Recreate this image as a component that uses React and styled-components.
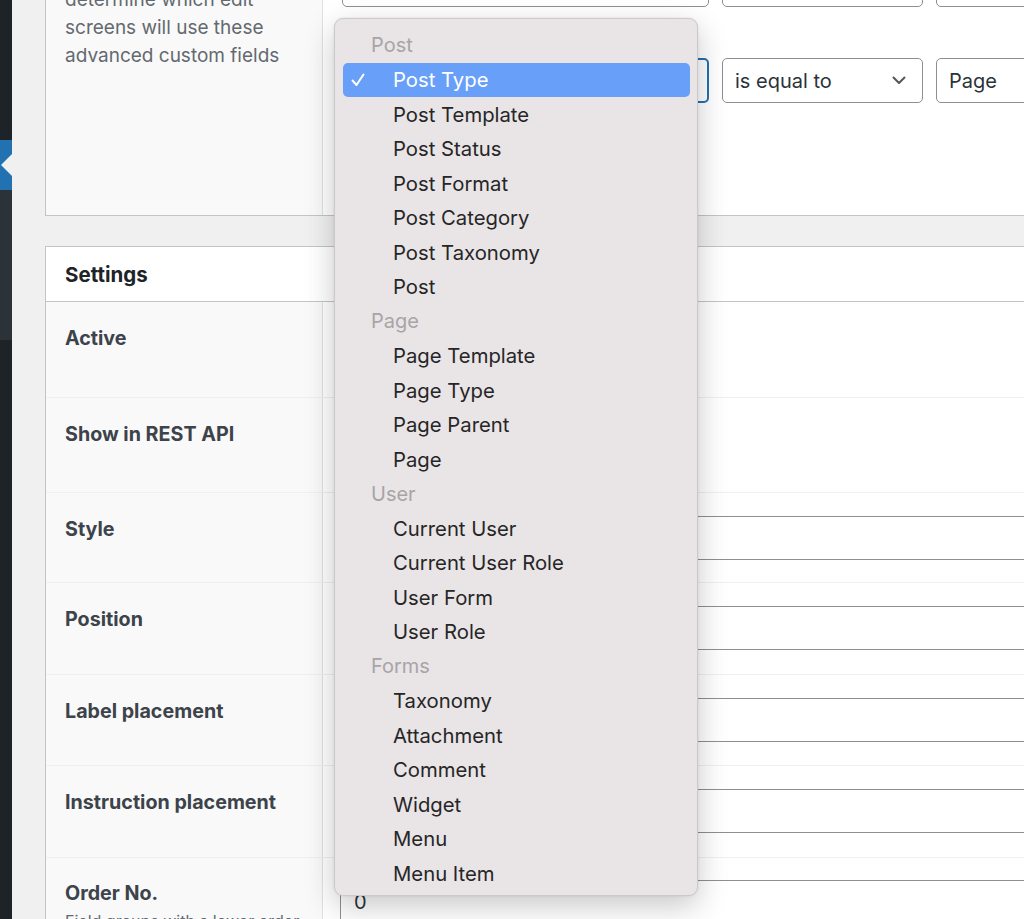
import React from "react";
import styled, { createGlobalStyle } from "styled-components";

const GlobalStyle = createGlobalStyle`
  html, body {
    margin: 0;
    padding: 0;
    background: #f0f0f1;
    overflow: hidden;
  }
  body {
    font-family: Inter, "Noto Sans", "Liberation Sans", sans-serif;
    -webkit-font-smoothing: antialiased;
  }
`;

// 전체 화면
const Page = styled.div`
  position: relative;
  display: flex;
  width: 1024px;
  height: 919px;
  overflow: hidden;
  background: #f0f0f1;
`;

// 왼쪽 관리자 메뉴 (잘린 부분)
const Sidebar = styled.div`
  display: flex;
  flex-direction: column;
  width: 12px;
  flex-shrink: 0;
`;

const SideBlock = styled.div`
  position: relative;
  height: ${(p) => p.$h}px;
  flex: ${(p) => (p.$grow ? 1 : "none")};
  background: ${(p) => p.$bg};
`;

const Notch = styled.div`
  position: absolute;
  right: 0;
  top: 14px;
  width: 0;
  height: 0;
  border-top: 11px solid transparent;
  border-bottom: 11px solid transparent;
  border-right: 11px solid #f0f0f1;
`;

const Main = styled.div`
  flex: 1;
  min-width: 0;
  padding-left: 33px;
`;

const Content = styled.div`
  width: 1100px;
  margin-top: -96px;
  display: flex;
  flex-direction: column;
  gap: 30px;
`;

const Panel = styled.div`
  background: #fff;
  border: 1px solid #c3c4c7;
  border-right: none;
`;

const FieldRow = styled.div`
  box-sizing: border-box;
  display: grid;
  grid-template-columns: 277px 1fr;
  min-height: ${(p) => p.$minH || 92}px;
  border-top: ${(p) => (p.$first ? "none" : "1px solid #f0f0f1")};
`;

const LabelCell = styled.div`
  background: #f9f9f9;
  border-right: 1px solid #e1e1e1;
  padding: ${(p) => p.$pt ?? 22.5}px 19px 0;
`;

const InputCell = styled.div`
  padding: ${(p) => p.$pt ?? 22.5}px 0 0 17px;
  display: flex;
  flex-direction: column;
  gap: ${(p) => p.$gap || 0}px;
`;

const Label = styled.div`
  font-size: 19.7px;
  line-height: 27px;
  font-weight: 700;
  color: #3c434a;
`;

const Description = styled.div`
  margin-top: 6px;
  font-size: 19px;
  line-height: 28px;
  color: #646970;
`;

const SmallNote = styled.div`
  margin-top: 3px;
  font-size: 16px;
  line-height: 22px;
  color: #646970;
`;

const RuleLine = styled.div`
  display: flex;
  gap: 13px;
  padding-left: 2px;
`;

const Select = styled.div`
  box-sizing: border-box;
  display: flex;
  align-items: center;
  justify-content: space-between;
  width: ${(p) => p.$w}px;
  height: ${(p) => p.$h || 45}px;
  padding: 0 16px 0 12px;
  background: #fff;
  border: ${(p) => (p.$focus ? "2px solid #2271b1" : "1px solid #8c8f94")};
  border-radius: 5px;
  font-size: 20px;
  color: #2c3338;
`;

const TextInput = styled.div`
  box-sizing: border-box;
  display: flex;
  align-items: center;
  width: 760px;
  height: 44px;
  padding-left: 13px;
  border: 1px solid #8c8f94;
  border-radius: 5px;
  font-size: 20px;
  color: #2c3338;
`;

const Toggle = styled.div`
  width: 48px;
  height: 26px;
  border-radius: 13px;
  background: #2271b1;
`;

const PanelHeader = styled.div`
  height: 54px;
  display: flex;
  align-items: center;
  padding-left: 19px;
  border-bottom: 1px solid #c3c4c7;
  font-size: 20.5px;
  font-weight: 700;
  color: #1d2327;
`;

// 드롭다운 메뉴 (macOS 스타일)
const Menu = styled.div`
  position: absolute;
  left: 334px;
  top: 18px;
  width: 364px;
  height: 878px;
  box-sizing: border-box;
  padding: 9px 7px 0 8px;
  background: #e9e4e6;
  border: 1px solid #cdc9cb;
  border-radius: 9px;
  box-shadow: 0 10px 30px rgba(0, 0, 0, 0.22), 0 0 3px rgba(0, 0, 0, 0.08);
`;

const GroupTitle = styled.div`
  height: 34.5px;
  display: flex;
  align-items: center;
  padding-left: 28px;
  font-size: 20px;
  color: #a8a4a6;
`;

const Item = styled.div`
  position: relative;
  height: 34.5px;
  display: flex;
  align-items: center;
  padding-left: 50px;
  border-radius: 5px;
  font-size: 20.3px;
  color: ${(p) => (p.$selected ? "#fff" : "#262626")};
  background: ${(p) => (p.$selected ? "#689ff8" : "transparent")};
`;

const Check = styled.svg`
  position: absolute;
  left: 8px;
  top: 10px;
`;

const Chevron = () => (
  <svg width="14" height="9" viewBox="0 0 14 9">
    <polyline points="1.5,1.5 7,7 12.5,1.5" fill="none" stroke="#50575e" strokeWidth="2" strokeLinecap="round" strokeLinejoin="round" />
  </svg>
);

const groups = [
  { title: "Post", items: ["Post Type", "Post Template", "Post Status", "Post Format", "Post Category", "Post Taxonomy", "Post"] },
  { title: "Page", items: ["Page Template", "Page Type", "Page Parent", "Page"] },
  { title: "User", items: ["Current User", "Current User Role", "User Form", "User Role"] },
  { title: "Forms", items: ["Taxonomy", "Attachment", "Comment", "Widget", "Menu", "Menu Item"] },
];

const settings = [
  { label: "Active", kind: "toggle", h: 95 },
  { label: "Show in REST API", kind: "toggle", h: 95 },
  { label: "Style", kind: "select", h: 90 },
  { label: "Position", kind: "select", h: 92 },
  { label: "Label placement", kind: "select", h: 91 },
  { label: "Instruction placement", kind: "select", h: 92 },
  { label: "Order No.", kind: "number", h: 92 },
];

const App = () => {
  return (
    <Page>
      <GlobalStyle />
      <Sidebar>
        <SideBlock $h={140} $bg="#1d2327" />
        <SideBlock $h={50} $bg="#2271b1">
          <Notch />
        </SideBlock>
        <SideBlock $h={150} $bg="#2c3338" />
        <SideBlock $grow $bg="#1d2327" />
      </Sidebar>

      <Main>
        <Content>
          <Panel>
            <FieldRow $first $minH={310}>
              <LabelCell $pt={20}>
                <Label>Rules</Label>
                <Description>
                  Create a set of rules to
                  <br />
                  determine which edit
                  <br />
                  screens will use these
                  <br />
                  advanced custom fields
                </Description>
              </LabelCell>
              <InputCell $pt={57} $gap={51}>
                <RuleLine>
                  <Select $w={367}>Post Type<Chevron /></Select>
                  <Select $w={201}>is equal to<Chevron /></Select>
                  <Select $w={200}>Post<Chevron /></Select>
                </RuleLine>
                <RuleLine>
                  <Select $w={367} $focus>Post Type<Chevron /></Select>
                  <Select $w={201}>is equal to<Chevron /></Select>
                  <Select $w={200}>Page<Chevron /></Select>
                </RuleLine>
              </InputCell>
            </FieldRow>
          </Panel>

          <Panel>
            <PanelHeader>Settings</PanelHeader>
            {settings.map((s, i) => (
              <FieldRow key={s.label} $first={i === 0} $minH={s.h}>
                <LabelCell $pt={s.kind === "number" ? 21.5 : 22.5}>
                  <Label>{s.label}</Label>
                  {s.kind === "number" && (
                    <SmallNote>Field groups with a lower order will appear first</SmallNote>
                  )}
                </LabelCell>
                <InputCell $pt={s.kind === "number" ? 22 : 22.5}>
                  {s.kind === "toggle" && <Toggle />}
                  {s.kind === "select" && <Select $w={760} $h={44}>Standard<Chevron /></Select>}
                  {s.kind === "number" && <TextInput>0</TextInput>}
                </InputCell>
              </FieldRow>
            ))}
          </Panel>
        </Content>
      </Main>

      <Menu>
        {groups.map((g) => (
          <React.Fragment key={g.title}>
            <GroupTitle>{g.title}</GroupTitle>
            {g.items.map((it, idx) => {
              const selected = g.title === "Post" && idx === 0;
              return (
                <Item key={g.title + it} $selected={selected}>
                  {selected && (
                    <Check width="14" height="14" viewBox="0 0 14 14">
                      <polyline points="1.5,7.5 5.5,12 12.5,1.5" fill="none" stroke="#fff" strokeWidth="2" strokeLinecap="round" strokeLinejoin="round" />
                    </Check>
                  )}
                  {it}
                </Item>
              );
            })}
          </React.Fragment>
        ))}
      </Menu>
    </Page>
  );
};

export default App;
